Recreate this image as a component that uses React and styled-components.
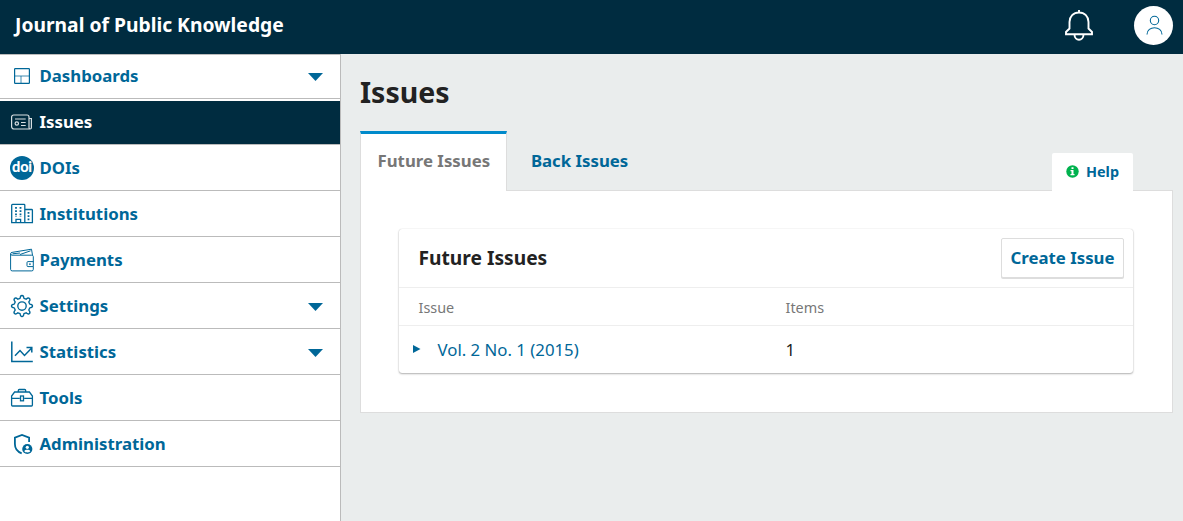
import React from "react";
import styled, { createGlobalStyle } from "styled-components";

const GlobalStyle = createGlobalStyle`
  *, *::before, *::after { box-sizing: border-box; }
  body {
    margin: 0;
    background: #eaeded;
    color: #222;
    font-family: "Noto Sans", "Open Sans", sans-serif;
    font-size: 16.8px;
  }
`;

const Page = styled.div`
  display: flex;
  flex-direction: column;
  height: 521px;
  overflow: hidden;
`;

const Header = styled.header`
  display: flex;
  align-items: center;
  height: 54px;
  flex: none;
  padding: 0 10px 4px 15px;
  background: #002c40;
`;

const JournalName = styled.div`
  flex: 1;
  color: #fff;
  font-size: 19.3px;
  font-weight: 700;
  line-height: 28px;
  white-space: nowrap;
`;

const BellButton = styled.div`
  display: flex;
  margin-right: 40px;
`;

const Avatar = styled.div`
  display: flex;
  align-items: center;
  justify-content: center;
  width: 39px;
  height: 39px;
  border-radius: 50%;
  background: #fff;
`;

const Body = styled.div`
  display: flex;
  flex: 1;
  min-height: 0;
`;

const Sidebar = styled.nav`
  display: flex;
  flex-direction: column;
  gap: 2px;
  width: 341px;
  flex: none;
  background: #fff;
  border-top: 1px solid #bbb;
  border-right: 1px solid #bbb;
`;

const NavItem = styled.a`
  display: flex;
  align-items: center;
  height: 44px;
  flex: none;
  padding: 0 17px 1px 10px;
  border-bottom: 1px solid #bbb;
  background: ${(p) => (p.$active ? "#002c40" : "#fff")};
  color: ${(p) => (p.$active ? "#fff" : "#006798")};
`;

const NavIcon = styled.span`
  display: flex;
  width: 24px;
  height: 24px;
  margin-right: 5.5px;
`;

const NavLabel = styled.span`
  flex: 1;
  font-weight: 700;
  line-height: 24px;
`;

const Chevron = styled.svg`
  width: 15px;
  height: 8px;
  margin-top: 2px;
`;

const Main = styled.main`
  flex: 1;
  padding: 20px 10px 0 19px;
`;

const PageTitle = styled.h1`
  margin: 0;
  font-size: 28.5px;
  line-height: 36px;
  font-weight: 700;
`;

const TabBar = styled.div`
  display: flex;
  align-items: flex-end;
  height: 60px;
  margin-top: 21px;
  margin-bottom: -1px;
`;

const Tab = styled.div`
  height: 60px;
  padding: ${(p) => (p.$active ? "0 16px 0 16.5px" : "3px 24px 0 23.5px")};
  line-height: 54px;
  font-weight: 700;
  white-space: nowrap;
  border: solid #ddd;
  border-width: ${(p) => (p.$active ? "0 1px" : "0")};
  ${(p) => p.$active && "width: 147.4px; border-top: 3px solid #008acb;"}
  background: ${(p) => (p.$active ? "#fff" : "transparent")};
  color: ${(p) => (p.$active ? "#777" : "#006798")};
`;

const HelpTab = styled.div`
  display: flex;
  align-items: center;
  gap: 7px;
  width: 81px;
  height: 38px;
  margin: 0 40px 0 auto;
  padding: 0 0 1px 14px;
  border-radius: 2px 2px 0 0;
  background: #fff;
  color: #006798;
  font-size: 14.4px;
  font-weight: 700;
`;

const Panel = styled.section`
  height: 223px;
  padding: 38px 39px 39px 38px;
  border: 1px solid #ddd;
  background: #fff;
`;

const Card = styled.div`
  height: 144px;
  border-radius: 3px;
  background: #fff;
  box-shadow: 0 0 1px rgba(0, 0, 0, 0.2), 0 1px 2px rgba(0, 0, 0, 0.3);
`;

const CardHeader = styled.div`
  display: flex;
  align-items: center;
  justify-content: space-between;
  height: 59px;
  padding: 0 9px 0 19.5px;
  border-bottom: 1px solid #eee;
`;

const CardTitle = styled.h2`
  margin: 0;
  font-size: 19.2px;
  font-weight: 700;
  line-height: 26px;
`;

const CreateButton = styled.button`
  width: 123px;
  height: 40px;
  padding: 0;
  border: 1px solid #ddd;
  border-radius: 2px;
  background: #fff;
  box-shadow: 0 1px 0 #ddd;
  color: #006798;
  font: 700 16.8px/24px "Noto Sans", sans-serif;
`;

const Row = styled.div`
  display: grid;
  grid-template-columns: 367px 1fr;
  align-items: center;
  padding-left: 19.5px;
  height: ${(p) => (p.$head ? "38px" : "47px")};
  border-bottom: ${(p) => (p.$head ? "1px solid #eee" : "0")};
  color: ${(p) => (p.$head ? "#777" : "#222")};
  font-size: ${(p) => (p.$head ? "14.4px" : "16.8px")};
  line-height: ${(p) => (p.$head ? "20px" : "23px")};
  padding-top: ${(p) => (p.$head ? "2px" : "0")};
`;

const IssueLink = styled.a`
  display: flex;
  align-items: center;
  gap: 17px;
  margin-left: -6px;
  color: #006798;
`;

const ExpandArrow = styled.svg`
  width: 8px;
  height: 8px;
  margin-bottom: 1px;
`;

const icons = {
  dashboards: (
    <g strokeWidth="1.2">
      <rect x="4.6" y="4.6" width="14.8" height="14.8" rx="0.6" />
      <path d="M4.6 12H19.4M11 12V19.4" strokeWidth="1" opacity=".75" />
    </g>
  ),
  issues: (
    <g strokeWidth="1.2" opacity=".85">
      <path d="M20.500 19H4a2.400 2.400 0 0 1-2.400-2.400V7A2 2 0 0 1 3.600 5H17A2 2 0 0 1 19 7V17.500A1.200 1.500 0 0 0 21.400 17.500V8.500H19" />
      <circle cx="6.800" cy="13.500" r="1.700" />
      <path d="M5 9H15.700M11 12.500H15.700M11 15.500H15.700" />
    </g>
  ),
  institutions: (
    <g strokeWidth="1.3">
      <path d="M1.700 20.600V3.200a.8.8 0 0 1 .8-.8H14a.8.8 0 0 1 .8.8V20.600ZM14.800 7.500h6.800a.8.8 0 0 1 .8.8V20.600H14.800M6 20.600V17.300h4.600v3.300" />
      <path d="M6 5v10M10.500 5v10M18.500 10v8.500" strokeWidth="1.800" strokeDasharray="1.800 1.400" />
    </g>
  ),
  payments: (
    <g strokeWidth="1">
      <path d="M23.300 14V8.500a1.500 1.500 0 0 0-1.500-1.300H2A1.500 1.500 0 0 1 .6 5.800V21.400a1.600 1.600 0 0 0 1.600 1.500H21.800a1.500 1.500 0 0 0 1.500-1.500V18.500" />
      <path d="M.6 5.800A1.500 1.500 0 0 1 2 4.400L21.500 1.200l1 6M10 6.500 20.600 2.800M2.500 5.800 10 5" />
      <path d="M23.300 13.600H18a1 1 0 0 0-1 1v3a1 1 0 0 0 1 1h5.300Z" />
      <path d="M19 16.100h1.800" strokeWidth="1.400" />
    </g>
  ),
  settings: (
    <g strokeWidth="1.350" strokeLinejoin="round">
      <path d="M10.100 4.300Q10.300 1.500 12 1.500T13.900 4.300L16.100 5.200Q18.200 3.300 19.500 4.500T18.800 7.900L19.700 10.100Q22.500 10.300 22.500 12T19.700 13.900L18.800 16.100Q20.700 18.200 19.500 19.500T16.100 18.800L13.900 19.700Q13.700 22.500 12 22.500T10.100 19.700L7.900 18.800Q5.800 20.700 4.500 19.500T5.200 16.100L4.300 13.900Q1.500 13.700 1.500 12T4.300 10.100L5.200 7.900Q3.300 5.800 4.500 4.500T7.900 5.200Z" />
      <circle cx="12" cy="12" r="4.200" />
    </g>
  ),
  statistics: (
    <g strokeWidth="1.500">
      <path d="M1.800 1.500V21.600H22.800" />
      <path d="M5 15.800l5-5.300 4.500 5L21.500 8.200M16.500 7.400h5.300v5" />
    </g>
  ),
  tools: (
    <g strokeWidth="1.300">
      <path d="M1.600 19.100V10l3-4H19.400l3 4V19.100a.9.9 0 0 1-.9.9H2.500a.9.9 0 0 1-.9-.9ZM8.300 6V4.500a1 1 0 0 1 1-1h5.400a1 1 0 0 1 1 1V6" />
      <path d="M1.600 12.300H9.800M14.200 12.300H22.400" />
      <rect x="10.500" y="10" width="3" height="4.800" />
    </g>
  ),
  administration: (
    <g strokeWidth="1.800">
      <path d="M11.700 21.300C8 20 4.900 16.500 4.900 12V5.600L12 3l7.100 2.600V10" />
      <circle cx="17.300" cy="17" r="5.100" fill="currentColor" stroke="none" />
      <circle cx="17.300" cy="15.300" r="1.600" fill="#fff" stroke="none" />
      <path d="M14.300 19.200c.8-1.900 5.200-1.900 6 0-1.200 1.600-4.800 1.600-6 0Z" fill="#fff" stroke="none" />
    </g>
  ),
};

const DoiBadge = styled.span`
  display: flex;
  justify-content: center;
  width: 24px;
  height: 24px;
  border-radius: 50%;
  background: #006798;
  color: #fff;
  font: 900 14.5px/22px Lato, sans-serif;
  letter-spacing: -0.2px;
`;

function Icon({ name }) {
  if (name === "doi") return <DoiBadge>doi</DoiBadge>;
  return (
    <svg width="24" height="24" viewBox="0 0 24 24" fill="none" stroke="currentColor">
      {icons[name]}
    </svg>
  );
}

const items = [
  { label: "Dashboards", icon: "dashboards", expandable: true },
  { label: "Issues", icon: "issues", active: true },
  { label: "DOIs", icon: "doi" },
  { label: "Institutions", icon: "institutions" },
  { label: "Payments", icon: "payments" },
  { label: "Settings", icon: "settings", expandable: true },
  { label: "Statistics", icon: "statistics", expandable: true },
  { label: "Tools", icon: "tools" },
  { label: "Administration", icon: "administration" },
];

export default function App() {
  return (
    <Page>
      <GlobalStyle />
      <Header>
        <JournalName>Journal of Public Knowledge</JournalName>
        <BellButton>
          <svg width="30" height="32" viewBox="0 0 30 32" fill="none" stroke="#fff" strokeWidth="1.900">
            <path d="M15 1V3.500M15 3.500c-5.600 0-9.500 4-9.500 9.500v6.500L2 23v2.300H28V23l-3.500-3.500V13c0-5.500-3.900-9.500-9.500-9.500Z" />
            <path d="M10.500 25.500c0 7 9 7 9 0" />
          </svg>
        </BellButton>
        <Avatar>
          <svg width="18" height="20" viewBox="0 0 18 20" fill="none" stroke="#006798" strokeWidth="1.100">
            <circle cx="9.500" cy="5.500" r="4.200" />
            <path d="M2 19.500c0-9 15-9 15 0" />
          </svg>
        </Avatar>
      </Header>
      <Body>
        <Sidebar>
          {items.map((item) => (
            <NavItem key={item.label} $active={item.active}>
              <NavIcon>
                <Icon name={item.icon} />
              </NavIcon>
              <NavLabel>{item.label}</NavLabel>
              {item.expandable && (
                <Chevron viewBox="0 0 15 8" fill="currentColor">
                  <path d="M0 0H15L7.500 8Z" />
                </Chevron>
              )}
            </NavItem>
          ))}
        </Sidebar>
        <Main>
          <PageTitle>Issues</PageTitle>
          <TabBar>
            <Tab $active>Future Issues</Tab>
            <Tab>Back Issues</Tab>
            <HelpTab>
              <svg width="13" height="13" viewBox="0 0 13 13">
                <circle cx="6.500" cy="6.500" r="6.200" fill="#00b24e" />
                <path d="M5.500 2.200h2v1.700h-2ZM4.500 5h3v4h1v1.300h-4V9h1V6.300h-1Z" fill="#fff" />
              </svg>
              Help
            </HelpTab>
          </TabBar>
          <Panel>
            <Card>
              <CardHeader>
                <CardTitle>Future Issues</CardTitle>
                <CreateButton>Create Issue</CreateButton>
              </CardHeader>
              <Row $head>
                <span>Issue</span>
                <span>Items</span>
              </Row>
              <Row>
                <IssueLink>
                  <ExpandArrow viewBox="0 0 8 8" fill="currentColor">
                    <path d="M0 0L7.500 4L0 8Z" />
                  </ExpandArrow>
                  Vol. 2 No. 1 (2015)
                </IssueLink>
                <span>1</span>
              </Row>
            </Card>
          </Panel>
        </Main>
      </Body>
    </Page>
  );
}
